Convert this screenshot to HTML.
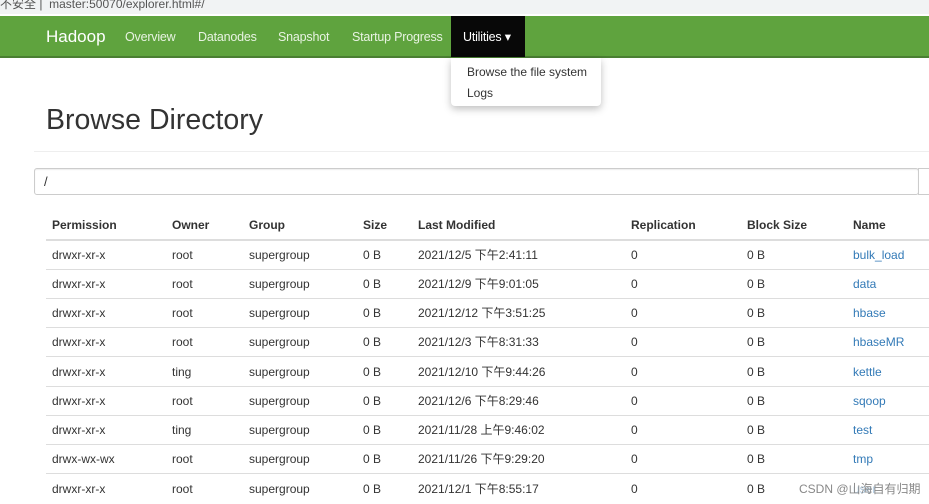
<!DOCTYPE html>
<html><head><meta charset="utf-8"><style>
*{margin:0;padding:0;box-sizing:border-box}
body{width:929px;height:500px;overflow:hidden;background:#fff;font-family:"Liberation Sans","Noto Sans CJK SC",sans-serif;color:#333;position:relative}
.addr{position:absolute;left:0;top:0;width:929px;height:14px;background:#f1f3f4;font-size:12px;line-height:8px;color:#555;white-space:nowrap;overflow:hidden}
.nav{position:absolute;left:0;top:16px;width:929px;height:42px;background:#5fa33e;border-bottom:2px solid #4a7f32}
.nav span{position:absolute;top:0;line-height:42px;font-size:12.5px;color:#e8f3e2;letter-spacing:-0.2px}
.nav .brand{font-size:17px;color:#fff;letter-spacing:0}
.util{position:absolute;left:451px;top:0;width:74px;height:41px;background:#080808}
.dd{position:absolute;left:451px;top:58px;width:150px;height:48px;background:#fff;box-shadow:0 3px 8px rgba(0,0,0,.25);border-radius:0 0 4px 4px;font-size:12px;color:#333}
.dd div{position:absolute;left:16px}
h1{position:absolute;left:46px;top:104px;font-size:28.5px;font-weight:normal;color:#333}
.hr{position:absolute;left:34px;top:151px;width:895px;height:1px;background:#eee}
.inp{position:absolute;left:34px;top:168px;width:885px;height:27px;border:1px solid #ccc;border-radius:3px;font-size:13px;line-height:25px;padding-left:9px;box-shadow:inset 0 1px 1px rgba(0,0,0,.08)}
.inp2{position:absolute;left:918px;top:168px;width:20px;height:27px;border:1px solid #ccc}
.row{position:absolute;left:46px;width:883px;height:29px;font-size:12px}
.row span{position:absolute;top:1px;line-height:29px;white-space:nowrap}
.hd{font-weight:bold}
.line{position:absolute;left:46px;width:883px;height:1px;background:#ddd}
a{color:#337ab7;text-decoration:none}
.wm{position:absolute;left:799px;top:480px;font-size:12px;color:#888;background:rgba(255,255,255,.6)}
</style></head><body>
<div class="addr">不安全 | &nbsp;master:50070/explorer.html#/</div>
<div class="nav">
<span class="brand" style="left:46px">Hadoop</span>
<span style="left:125px">Overview</span>
<span style="left:198px">Datanodes</span>
<span style="left:278px">Snapshot</span>
<span style="left:352px">Startup Progress</span>
<div class="util"></div>
<span style="left:463px;color:#fff">Utilities ▾</span>
</div>
<div class="dd"><div style="top:7px">Browse the file system</div><div style="top:28px">Logs</div></div>
<h1>Browse Directory</h1>
<div class="hr"></div>
<div class="inp">/</div><div class="inp2"></div>
<div class="row hd" style="top:210px"><span style="left:6px">Permission</span><span style="left:126px">Owner</span><span style="left:203px">Group</span><span style="left:317px">Size</span><span style="left:372px">Last Modified</span><span style="left:585px">Replication</span><span style="left:701px">Block Size</span><span style="left:807px">Name</span></div>
<div class="line" style="top:239px;height:2px"></div>
<div class="row" style="top:240px"><span style="left:6px">drwxr-xr-x</span><span style="left:126px">root</span><span style="left:203px">supergroup</span><span style="left:317px">0 B</span><span style="left:372px">2021/12/5 下午2:41:11</span><span style="left:585px">0</span><span style="left:701px">0 B</span><span style="left:807px"><a>bulk_load</a></span></div>
<div class="line" style="top:269px"></div>
<div class="row" style="top:269px"><span style="left:6px">drwxr-xr-x</span><span style="left:126px">root</span><span style="left:203px">supergroup</span><span style="left:317px">0 B</span><span style="left:372px">2021/12/9 下午9:01:05</span><span style="left:585px">0</span><span style="left:701px">0 B</span><span style="left:807px"><a>data</a></span></div>
<div class="line" style="top:298px"></div>
<div class="row" style="top:298px"><span style="left:6px">drwxr-xr-x</span><span style="left:126px">root</span><span style="left:203px">supergroup</span><span style="left:317px">0 B</span><span style="left:372px">2021/12/12 下午3:51:25</span><span style="left:585px">0</span><span style="left:701px">0 B</span><span style="left:807px"><a>hbase</a></span></div>
<div class="line" style="top:327px"></div>
<div class="row" style="top:327px"><span style="left:6px">drwxr-xr-x</span><span style="left:126px">root</span><span style="left:203px">supergroup</span><span style="left:317px">0 B</span><span style="left:372px">2021/12/3 下午8:31:33</span><span style="left:585px">0</span><span style="left:701px">0 B</span><span style="left:807px"><a>hbaseMR</a></span></div>
<div class="line" style="top:356px"></div>
<div class="row" style="top:357px"><span style="left:6px">drwxr-xr-x</span><span style="left:126px">ting</span><span style="left:203px">supergroup</span><span style="left:317px">0 B</span><span style="left:372px">2021/12/10 下午9:44:26</span><span style="left:585px">0</span><span style="left:701px">0 B</span><span style="left:807px"><a>kettle</a></span></div>
<div class="line" style="top:386px"></div>
<div class="row" style="top:386px"><span style="left:6px">drwxr-xr-x</span><span style="left:126px">root</span><span style="left:203px">supergroup</span><span style="left:317px">0 B</span><span style="left:372px">2021/12/6 下午8:29:46</span><span style="left:585px">0</span><span style="left:701px">0 B</span><span style="left:807px"><a>sqoop</a></span></div>
<div class="line" style="top:415px"></div>
<div class="row" style="top:415px"><span style="left:6px">drwxr-xr-x</span><span style="left:126px">ting</span><span style="left:203px">supergroup</span><span style="left:317px">0 B</span><span style="left:372px">2021/11/28 上午9:46:02</span><span style="left:585px">0</span><span style="left:701px">0 B</span><span style="left:807px"><a>test</a></span></div>
<div class="line" style="top:444px"></div>
<div class="row" style="top:444px"><span style="left:6px">drwx-wx-wx</span><span style="left:126px">root</span><span style="left:203px">supergroup</span><span style="left:317px">0 B</span><span style="left:372px">2021/11/26 下午9:29:20</span><span style="left:585px">0</span><span style="left:701px">0 B</span><span style="left:807px"><a>tmp</a></span></div>
<div class="line" style="top:473px"></div>
<div class="row" style="top:474px"><span style="left:6px">drwxr-xr-x</span><span style="left:126px">root</span><span style="left:203px">supergroup</span><span style="left:317px">0 B</span><span style="left:372px">2021/12/1 下午8:55:17</span><span style="left:585px">0</span><span style="left:701px">0 B</span><span style="left:807px"><a>user</a></span></div>
<div class="wm">CSDN @山海自有归期</div>
</body></html>
